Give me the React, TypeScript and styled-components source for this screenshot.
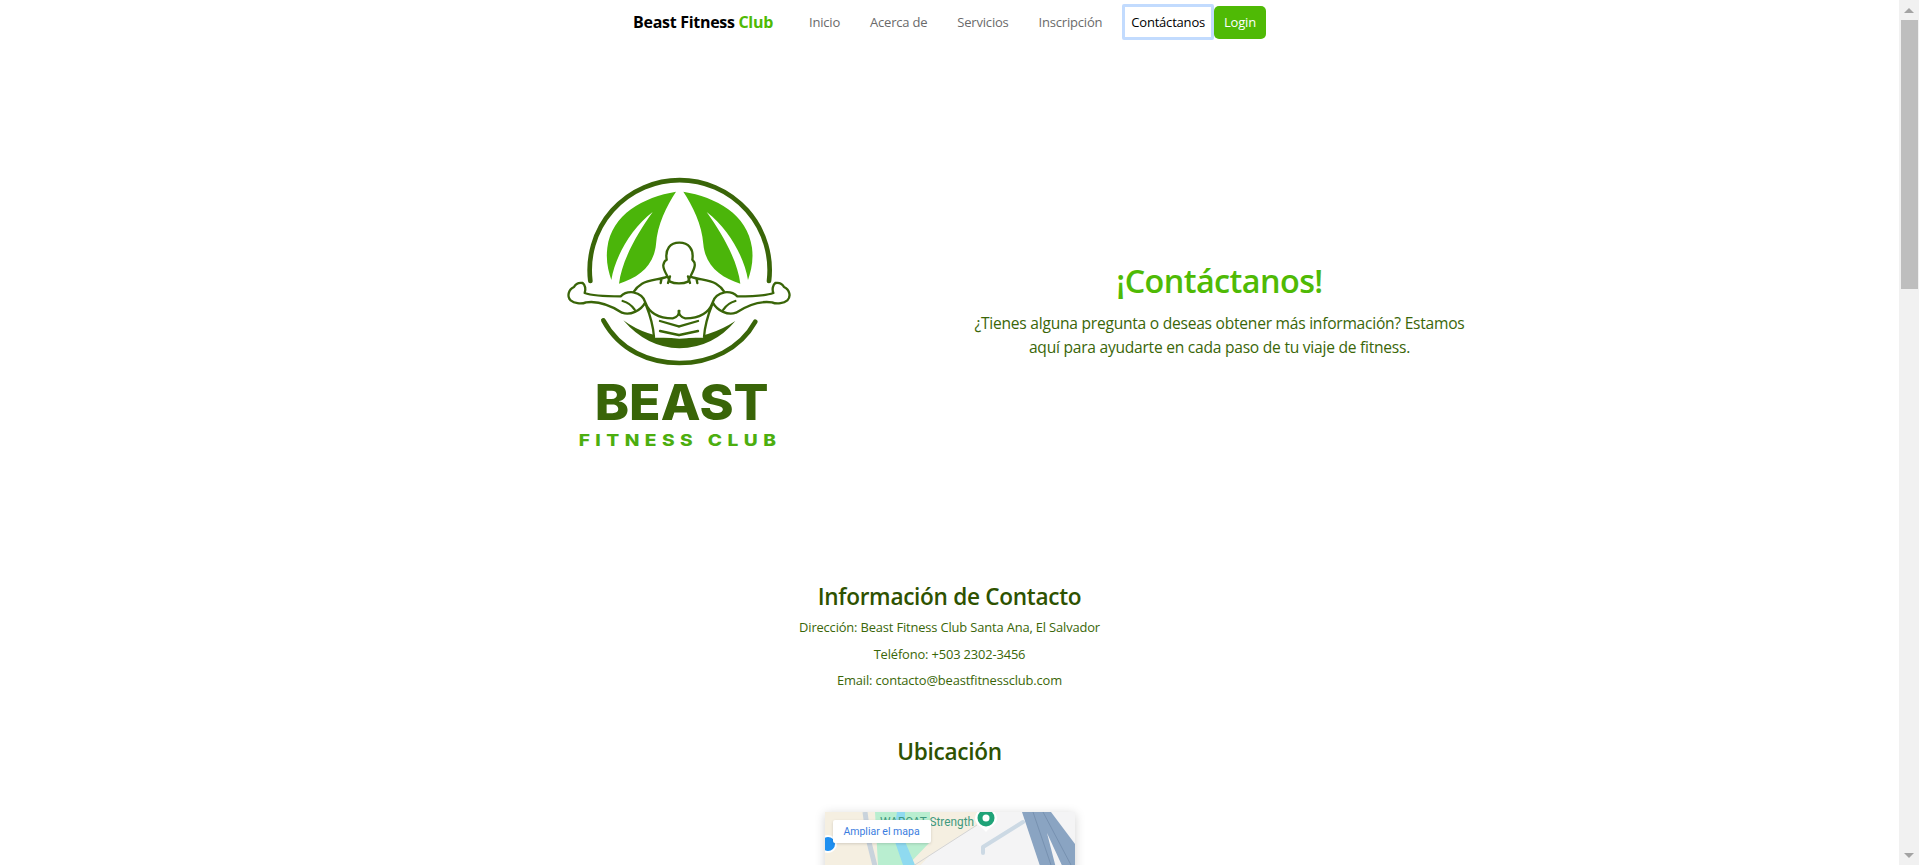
import * as React from 'react';
import styled, { createGlobalStyle } from 'styled-components';

const GlobalStyle = createGlobalStyle`
  html, body {
    margin: 0;
    padding: 0;
    background: #fff;
    font-family: "Open Sans", "Noto Sans", sans-serif;
  }
`;

const Page = styled.div`
  padding-right: 20px;
  padding-bottom: 40px;
`;

// <Scrollbar> - the browser's own bar is not painted in the headless window
const ScrollRail = styled.div`
  position: fixed;
  top: 0;
  right: 0;
  display: flex;
  flex-direction: column;
  width: 20px;
  height: 100vh;
  background: #f1f1f1;
`;
const ScrollArrow = styled.div<{ $down?: boolean }>`
  display: flex;
  align-items: center;
  justify-content: center;
  height: 20px;
  flex: none;
  margin-top: ${p => (p.$down ? 'auto' : 0)};
  &::before {
    content: '';
    border-left: 5px solid transparent;
    border-right: 5px solid transparent;
    border-${p => (p.$down ? 'top' : 'bottom')}: 5px solid #a3a3a3;
  }
`;
const ScrollThumb = styled.div`
  width: 17px;
  height: 269px;
  margin-left: 2px;
  background: #bebebe;
`;
// </Scrollbar>

// <Navbar>
const Nav = styled.nav`
  display: flex;
  justify-content: center;
  align-items: center;
  height: 44px;
`;
const Brand = styled.a`
  font-size: 16px;
  font-weight: 700;
  color: #000;
  margin-right: 21px;
  letter-spacing: -0.3px;
  span { color: #4fba05; }
`;
const NavLink = styled.a<{ $focused?: boolean }>`
  box-sizing: border-box;
  display: flex;
  align-items: center;
  height: 36px;
  margin: 0 ${p => (p.$focused ? 0 : 5)}px;
  margin-left: 5px;
  padding: 0 ${p => (p.$focused ? 6 : 10)}px;
  font-size: 13px;
  letter-spacing: -0.2px;
  color: ${p => (p.$focused ? '#000' : '#6a6a6a')};
  border: ${p => (p.$focused ? '3px solid #c2dbfe' : 'none')};
  border-radius: 2px;
`;
const LoginButton = styled.button`
  height: 33px;
  padding: 0 10px;
  border: none;
  border-radius: 5px;
  background: #4fba05;
  color: #fff;
  font-family: inherit;
  font-size: 13px;
  letter-spacing: -0.2px;
`;
// </Navbar>

// <Hero>
const Hero = styled.section`
  display: grid;
  grid-template-columns: 540px 549px;
  align-items: center;
  justify-content: center;
  height: 537px;
`;
const HeroCol = styled.div<{ $lift: number }>`
  display: flex;
  flex-direction: column;
  align-items: center;
  padding-bottom: ${p => p.$lift}px;
  text-align: center;
`;
const HeroTitle = styled.h1`
  margin: 0 0 9px;
  font-size: 32.4px;
  font-weight: 600;
  line-height: 44px;
  letter-spacing: -0.6px;
  color: #4fba05;
`;
const HeroText = styled.p`
  margin: 0;
  width: 520px;
  font-size: 15.6px;
  line-height: 24px;
  letter-spacing: -0.25px;
  color: #3a6608;
`;
// </Hero>

// <Contact>
const Contact = styled.section`
  display: flex;
  flex-direction: column;
  align-items: center;
  text-align: center;
`;
const Heading = styled.h2`
  margin: 0;
  font-size: 22.6px;
  font-weight: 600;
  line-height: 32px;
  letter-spacing: -0.3px;
  color: #2e5200;
`;
const InfoList = styled.div`
  display: flex;
  flex-direction: column;
  margin: 1px 0 42px;
`;
const InfoLine = styled.p`
  margin: 0;
  font-size: 12.9px;
  line-height: 26.5px;
  letter-spacing: -0.15px;
  color: #3a6608;
`;
const MapFrame = styled.div`
  position: relative;
  width: 250px;
  height: 250px;
  margin-top: 44px;
  background: #f4f4f5;
  box-shadow: 0 2px 10px rgba(0, 0, 0, 0.18);
  overflow: hidden;
`;
const MapCanvas = styled.svg`
  display: block;
`;
const MapButton = styled.a`
  position: absolute;
  top: 8px;
  left: 8px;
  display: flex;
  align-items: center;
  justify-content: center;
  width: 98px;
  height: 23px;
  background: #fff;
  border-radius: 2px;
  box-shadow: 0 1px 3px rgba(0, 0, 0, 0.15);
  font-family: Roboto, sans-serif;
  font-size: 10.5px;
  color: #3b7de0;
`;
// </Contact>

const LeafPath = 'M378 92 C280 108 185 160 172 260 C167 300 175 330 184 357 C195 290 240 205 308 153 C260 220 215 300 207 368 C265 350 312 315 318 250 C322 190 350 135 378 92 Z';
const ArmPath = `M352 347 C330 356 298 356 276 368 C264 375 256 384 250 394
  C232 392 220 398 212 406 C180 406 130 406 104 396
  C108 386 106 372 98 366 C86 364 76 370 72 378 C55 386 50 406 62 418 C72 426 92 431 108 424
  C150 418 190 438 216 455 C240 464 272 450 286 424 C282 410 270 398 250 394
  M218 420 C232 424 246 434 254 446
  M286 424 C296 452 322 472 368 472 C384 468 388 458 386 450
  M288 432 C300 462 310 498 312 528
  M330 480 L386 496
  M330 510 L386 522
  M360 346 L354 366 M334 356 L332 366`;

const Logo = () => (
  <svg width="250" height="300" viewBox="0 0 750 900">
    <path d="M121 360 A270 270 0 1 1 657 360" fill="none" stroke="#396508" strokeWidth="14" strokeLinecap="round" />
    <path d="M160 478 C210 570 300 606 388 606 C480 606 570 565 616 482" fill="none" stroke="#396508" strokeWidth="14" strokeLinecap="round" />
    <path d={LeafPath} fill="#4bb50a" />
    <path d={LeafPath} fill="#4bb50a" transform="matrix(-1 0 0 1 778 0)" />
    <path d="M220 478 Q290 560 388 562 Q490 560 556 480 Q480 530 388 533 Q290 530 220 478 Z" fill="#396508" />
    <path d="M286 424 L312 530 L462 530 L488 424 L420 350 L354 350 Z" fill="#fff" />
    <path d="M360 362 C352 342 338 326 340 312 C342 303 346 298 350 296 C345 265 360 245 388 245 C416 245 432 265 427 296 C431 300 436 305 434 315 C432 330 420 345 414 362 C400 369 374 369 360 362 Z" fill="#fff" stroke="#396508" strokeWidth="7" />
    <path d={ArmPath} fill="none" stroke="#396508" strokeWidth="7" strokeLinejoin="round" strokeLinecap="round" />
    <path d={ArmPath} fill="none" stroke="#396508" strokeWidth="7" strokeLinejoin="round" strokeLinecap="round" transform="matrix(-1 0 0 1 774 0)" />
    <text x="134" y="777" textLength="522" lengthAdjust="spacingAndGlyphs" fontFamily="Inter, sans-serif" fontWeight="800" fontSize="147" fill="#396508">BEAST</text>
    <text x="86" y="856" textLength="608" lengthAdjust="spacingAndGlyphs" letterSpacing="14" fontFamily="Inter, sans-serif" fontWeight="800" fontSize="49" fill="#4cae0f">FITNESS CLUB</text>
  </svg>
);

const MapDrawing = () => (
  <MapCanvas width="250" height="250" viewBox="0 0 250 250">
    <path d="M0 0 H152 V13 L105 43 L80 70 L40 250 H0 Z" fill="#f5efe1" />
    <path d="M50 0 H105 V30 L83 53 L78 70 H58 L53 53 Z" fill="#b9eed0" />
    <path d="M72 0 H80 V8 L76 20 L90 53 H78 L68 24 Z" fill="#8fdaf0" />
    <path d="M40 0 L44 30 L54 70" fill="none" stroke="#c9d3dc" strokeWidth="5" />
    <path d="M85 56 L152 13" fill="none" stroke="#d4d4d4" strokeWidth="1" />
    <path d="M197 0 H226 L250 32 V60 H240 L222 21 L232 60 H217 Z" fill="#8aa4c2" />
    <path d="M208 0 L226 53 M218 0 L246 53" fill="none" stroke="#7791b0" strokeWidth="1" />
    <path d="M198 10 L158 35 V41" fill="none" stroke="#ccd9e4" strokeWidth="4" strokeLinecap="round" strokeLinejoin="round" />
    <text x="55" y="14" textLength="94" lengthAdjust="spacingAndGlyphs" fontFamily="Roboto, sans-serif" fontSize="12.5" fill="#3f9a7e">WARCAT Strength</text>
    <path d="M150 7 C150 -7 172 -7 172 7 C172 12 165 15 161 20 C157 15 150 12 150 7 Z" fill="#fff" />
    <circle cx="161" cy="6" r="8.5" fill="#1fa378" />
    <circle cx="161" cy="6" r="3.5" fill="#fff" />
    <circle cx="3" cy="32" r="8" fill="#1e8ff0" stroke="#fff" strokeWidth="2" />
  </MapCanvas>
);

export default function App() {
  return (
    <Page>
      <GlobalStyle />
      <Nav>
        <Brand>Beast Fitness <span>Club</span></Brand>
        <NavLink>Inicio</NavLink>
        <NavLink>Acerca de</NavLink>
        <NavLink>Servicios</NavLink>
        <NavLink>Inscripción</NavLink>
        <NavLink $focused>Contáctanos</NavLink>
        <LoginButton>Login</LoginButton>
      </Nav>
      <Hero>
        <HeroCol $lift={4}><Logo /></HeroCol>
        <HeroCol $lift={8}>
          <HeroTitle>¡Contáctanos!</HeroTitle>
          <HeroText>¿Tienes alguna pregunta o deseas obtener más información? Estamos aquí para ayudarte en cada paso de tu viaje de fitness.</HeroText>
        </HeroCol>
      </Hero>
      <Contact>
        <Heading>Información de Contacto</Heading>
        <InfoList>
          <InfoLine>Dirección: Beast Fitness Club Santa Ana, El Salvador</InfoLine>
          <InfoLine>Teléfono: +503 2302-3456</InfoLine>
          <InfoLine>Email: contacto@beastfitnessclub.com</InfoLine>
        </InfoList>
        <Heading>Ubicación</Heading>
        <MapFrame>
          <MapDrawing />
          <MapButton>Ampliar el mapa</MapButton>
        </MapFrame>
      </Contact>
      <ScrollRail>
        <ScrollArrow />
        <ScrollThumb />
        <ScrollArrow $down />
      </ScrollRail>
    </Page>
  );
}
